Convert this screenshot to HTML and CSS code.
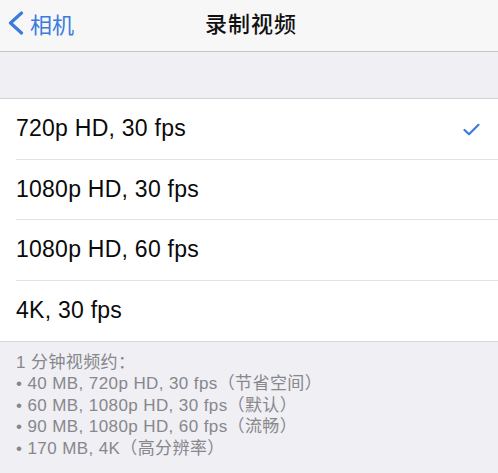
FILE: index.html
```html
<!DOCTYPE html>
<html lang="zh">
<head>
<meta charset="utf-8">
<link rel="stylesheet" href="styles.css">
</head>
<body>
<div class="screen">
  <header class="navbar">
    <div class="back">
      <svg class="chevron" width="17" height="24" viewBox="0 0 17 24"><path d="M14.5 2 L3.5 12 L14.5 22" fill="none" stroke="#3b7bdc" stroke-width="3.2" stroke-linecap="round" stroke-linejoin="round"/></svg>
      <span class="back-label">相机</span>
    </div>
    <h1 class="title">录制视频</h1>
  </header>
  <div class="spacer"></div>
  <ul class="list">
    <li class="row"><span class="label">720p HD, 30 fps</span>
      <svg class="check" width="17" height="13" viewBox="0 0 17 13"><path d="M1.5 7 L6 11.3 L15.5 1.8" fill="none" stroke="#3b7bdc" stroke-width="2.2" stroke-linecap="round" stroke-linejoin="round"/></svg>
    </li>
    <li class="row"><span class="label">1080p HD, 30 fps</span></li>
    <li class="row"><span class="label">1080p HD, 60 fps</span></li>
    <li class="row"><span class="label">4K, 30 fps</span></li>
  </ul>
  <footer class="note">
    <p>1 分钟视频约：</p>
    <p>• 40 MB, 720p HD, 30 fps（节省空间）</p>
    <p>• 60 MB, 1080p HD, 30 fps（默认）</p>
    <p>• 90 MB, 1080p HD, 60 fps（流畅）</p>
    <p>• 170 MB, 4K（高分辨率）</p>
  </footer>
</div>
</body>
</html>
```
FILE: styles.css
```css
* { box-sizing: border-box; }
html, body { margin: 0; padding: 0; }
body {
  width: 498px;
  height: 473px;
  overflow: hidden;
  background: #efeff4;
  font-family: "Liberation Sans", "Noto Sans CJK SC", sans-serif;
}
.screen { display: flex; flex-direction: column; }
.navbar {
  height: 52px;
  background: #f7f7f8;
  border-bottom: 1px solid #c4c4c8;
  display: flex;
  align-items: center;
  justify-content: center;
  position: relative;
}
.back {
  position: absolute;
  left: 7px;
  top: 11px;
  display: flex;
  align-items: center;
  gap: 6px;
  color: #3b7bdc;
}
.back-label {
  font-family: "Noto Sans CJK SC", sans-serif;
  font-size: 22px;
  line-height: 24px;
}
.title {
  margin: 0;
  font-family: "Noto Sans CJK SC", sans-serif;
  font-size: 22px;
  font-weight: 500;
  color: #111;
  letter-spacing: 1px;
  margin-top: -8px;
  margin-left: 4px;
}
.spacer {
  height: 47px;
  background: #efeff4;
  border-bottom: 1px solid #d2d2d6;
}
.list {
  list-style: none;
  margin: 0;
  padding: 0 0 0 16px;
  background: #fff;
  border-bottom: 1px solid #d6d6da;
}
.row {
  height: 60.5px;
  display: flex;
  align-items: center;
  justify-content: space-between;
  padding-right: 18px;
  border-bottom: 1px solid #e2e2e4;
}
.row:last-child { border-bottom: none; }
.label {
  font-size: 23px;
  color: #0a0a0a;
  letter-spacing: 0.25px;
}
.check { margin-top: 2px; }
.note {
  padding: 10px 16px 0;
  color: #87878c;
  font-size: 17px;
  letter-spacing: 0.4px;
  line-height: 21.4px;
}
.note p { margin: 0; }
```
